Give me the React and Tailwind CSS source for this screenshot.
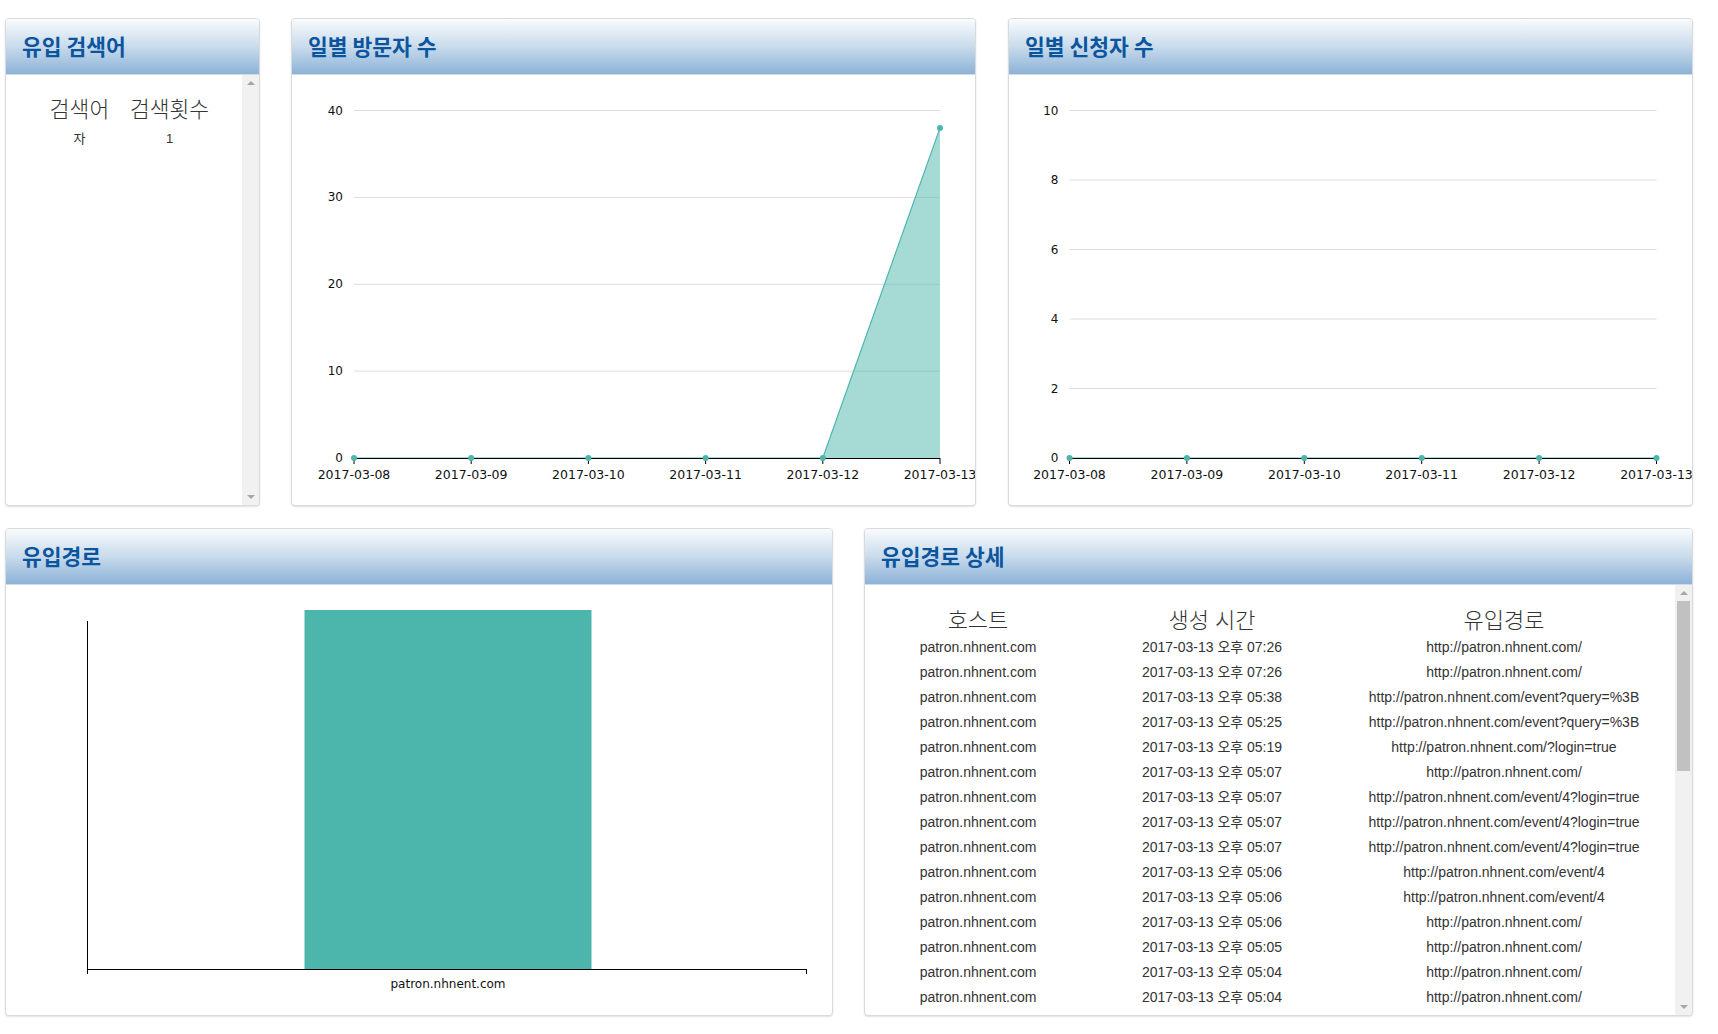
import React from "react";

const dates = [
  "2017-03-08",
  "2017-03-09",
  "2017-03-10",
  "2017-03-11",
  "2017-03-12",
  "2017-03-13",
];

const referrers = [
  ["07:26", "http://patron.nhnent.com/"],
  ["07:26", "http://patron.nhnent.com/"],
  ["05:38", "http://patron.nhnent.com/event?query=%3B"],
  ["05:25", "http://patron.nhnent.com/event?query=%3B"],
  ["05:19", "http://patron.nhnent.com/?login=true"],
  ["05:07", "http://patron.nhnent.com/"],
  ["05:07", "http://patron.nhnent.com/event/4?login=true"],
  ["05:07", "http://patron.nhnent.com/event/4?login=true"],
  ["05:07", "http://patron.nhnent.com/event/4?login=true"],
  ["05:06", "http://patron.nhnent.com/event/4"],
  ["05:06", "http://patron.nhnent.com/event/4"],
  ["05:06", "http://patron.nhnent.com/"],
  ["05:05", "http://patron.nhnent.com/"],
  ["05:04", "http://patron.nhnent.com/"],
  ["05:04", "http://patron.nhnent.com/"],
];

const TEAL = "#4db6ac";
const KO = "font-['Liberation_Sans','Noto_Sans_CJK_KR',sans-serif]";
const CHART_FONT = "DejaVu Sans, sans-serif";

const Card = ({ title, className, children }) => (
  <div
    className={`flex flex-col overflow-hidden rounded-[4px] border border-[#dadada] bg-white shadow-[0_1px_2px_rgba(0,0,0,0.12)] ${className}`}
  >
    <div className="flex h-[56px] shrink-0 items-center border-b border-[#d2dae3] bg-linear-to-b from-[#f9fbfd] via-[#c9dbec] to-[#8cb2d7] px-[16px]">
      <h2 className="font-['Noto_Sans_CJK_KR',sans-serif] text-[21.5px] font-bold text-[#0b559e]">
        {title}
      </h2>
    </div>
    <div className="relative flex min-h-0 flex-1">{children}</div>
  </div>
);

const Arrow = ({ up }) => (
  <div className="flex h-[16px] items-center justify-center">
    {up ? (
      <div className="h-0 w-0 border-x-[4px] border-b-[4px] border-x-transparent border-b-[#a6a6a6]" />
    ) : (
      <div className="h-0 w-0 border-x-[4px] border-t-[4px] border-x-transparent border-t-[#a6a6a6]" />
    )}
  </div>
);

const ScrollBar = ({ thumb }) => (
  <div className="flex w-[17px] shrink-0 flex-col bg-[#f1f1f1]">
    <Arrow up />
    {thumb && <div className="mx-[2px] h-[170px] bg-[#c1c1c1]" />}
    <div className="flex-1" />
    <Arrow />
  </div>
);

const LineChart = ({ max, step, values, x0, x1 }) => {
  const yBase = 383;
  const yTop = 35.5;
  const y = (v) => yBase - (v / max) * (yBase - yTop);
  const xs = dates.map((_, i) => x0 + (i * (x1 - x0)) / (dates.length - 1));
  const ticks = [];
  for (let v = 0; v <= max; v += step) ticks.push(v);
  const line = values.map((v, i) => `${xs[i]},${y(v)}`).join(" ");
  const area = `${xs[0]},${yBase} ${line} ${xs[xs.length - 1]},${yBase}`;

  return (
    <svg width="100%" height="100%" style={{ fontFamily: CHART_FONT }}>
      {ticks.map((v) => (
        <g key={v}>
          {v > 0 && (
            <line x1={x0} x2={x1} y1={y(v)} y2={y(v)} stroke="#dcdcdc" />
          )}
          <text
            x={x0 - 11}
            y={y(v) + 4}
            fontSize="12"
            textAnchor="end"
            fill="#111"
          >
            {v}
          </text>
        </g>
      ))}
      <polygon points={area} fill={TEAL} fillOpacity="0.5" />
      <polyline points={line} fill="none" stroke={TEAL} strokeWidth="1.2" />
      <line x1={x0} x2={x1} y1={yBase + 0.5} y2={yBase + 0.5} stroke="#000" />
      {xs.map((x, i) => (
        <g key={i}>
          <line x1={x} x2={x} y1={yBase} y2={yBase + 6} stroke="#000" />
          <circle cx={x} cy={y(values[i])} r="3" fill={TEAL} />
          <text
            x={x}
            y={yBase + 21}
            fontSize="12.5"
            textAnchor="middle"
            fill="#111"
          >
            {dates[i]}
          </text>
        </g>
      ))}
    </svg>
  );
};

const BarChart = () => (
  <svg width="100%" height="100%" style={{ fontFamily: CHART_FONT }}>
    <rect x="298.5" y="25" width="287" height="359" fill={TEAL} />
    <line x1="81.5" x2="81.5" y1="36" y2="389" stroke="#000" />
    <line x1="81" x2="800.5" y1="384.5" y2="384.5" stroke="#000" />
    <line x1="800.5" x2="800.5" y1="384" y2="389" stroke="#000" />
    <text x="442" y="403" fontSize="12" textAnchor="middle" fill="#111">
      patron.nhnent.com
    </text>
  </svg>
);

const KeywordTable = () => (
  <div className={`flex-1 ${KO} text-[#333]`}>
    <div className="ml-[34px] grid grid-cols-[79px_101px] pt-[20px]">
      <div className="flex h-[30px] items-center justify-center text-[21.5px] font-light">
        검색어
      </div>
      <div className="flex h-[30px] items-center justify-center text-[21.5px] font-light">
        검색횟수
      </div>
      <div className="flex h-[28px] items-center justify-center text-[13px]">
        자
      </div>
      <div className="flex h-[28px] items-center justify-center text-[13px]">
        1
      </div>
    </div>
  </div>
);

const ReferrerTable = () => (
  <div className={`flex-1 overflow-hidden ${KO} text-[#333]`}>
    <div className="grid grid-cols-[226px_242px_342px] pt-[19px]">
      {["호스트", "생성 시간", "유입경로"].map((h) => (
        <div
          key={h}
          className="flex h-[32px] items-center justify-center text-[22px] font-light"
        >
          {h}
        </div>
      ))}
    </div>
    <div className="mt-[-1px] grid grid-cols-[226px_242px_342px] text-[14px]">
      {referrers.map(([time, url], i) => (
        <React.Fragment key={i}>
          <div className="flex h-[25px] items-center justify-center">
            patron.nhnent.com
          </div>
          <div className="flex h-[25px] items-center justify-center">
            2017-03-13 오후 {time}
          </div>
          <div className="flex h-[25px] items-center justify-center whitespace-nowrap">
            {url}
          </div>
        </React.Fragment>
      ))}
    </div>
  </div>
);

export default function App() {
  return (
    <div className="min-h-[1034px] w-[1718px] bg-white pl-[5px] pt-[18px]">
      <div className="flex h-[488px]">
        <Card title="유입 검색어" className="w-[255px]">
          <KeywordTable />
          <ScrollBar />
        </Card>
        <Card title="일별 방문자 수" className="ml-[31px] w-[685px]">
          <LineChart
            max={40}
            step={10}
            values={[0, 0, 0, 0, 0, 38]}
            x0={62}
            x1={648}
          />
        </Card>
        <Card title="일별 신청자 수" className="ml-[32px] w-[685px]">
          <LineChart
            max={10}
            step={2}
            values={[0, 0, 0, 0, 0, 0]}
            x0={60.5}
            x1={647.5}
          />
        </Card>
      </div>
      <div className="mt-[22px] flex h-[488px]">
        <Card title="유입경로" className="w-[828px]">
          <BarChart />
        </Card>
        <Card title="유입경로 상세" className="ml-[31px] w-[829px]">
          <ReferrerTable />
          <ScrollBar thumb />
        </Card>
      </div>
    </div>
  );
}
